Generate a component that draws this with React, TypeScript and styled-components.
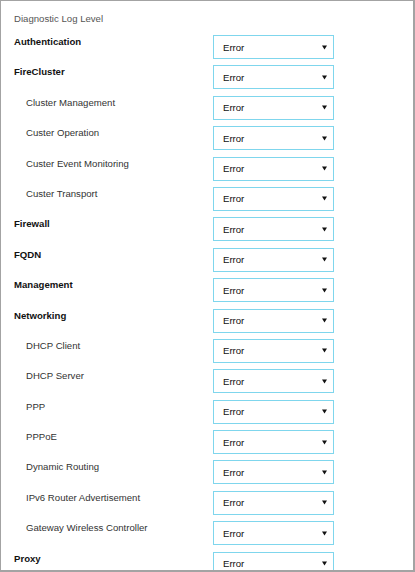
import React from 'react';
import styled, { createGlobalStyle } from 'styled-components';

const GlobalStyle = createGlobalStyle`
  html, body {
    margin: 0;
    padding: 0;
    background: #ffffff;
  }
  body {
    font-family: "Liberation Sans", Arial, sans-serif;
  }
`;

const Frame = styled.div`
  box-sizing: border-box;
  width: 415px;
  height: 572px;
  overflow: hidden;
  border-top: 1px solid #a3a3a3;
  border-left: 1px solid #a3a3a3;
  border-right: 2px solid #a3a3a3;
  border-bottom: 2px solid #a3a3a3;
  padding: 10.5px 0 0 13px;
  font-size: 9.6px;
`;

const Title = styled.div`
  line-height: 14px;
  color: #555555;
  margin-bottom: 9.5px;
`;

const List = styled.div`
  display: flex;
  flex-direction: column;
  gap: 6.4px;
`;

const Row = styled.div`
  display: flex;
  align-items: flex-start;
  height: 24px;
`;

const Label = styled.div<{ $sub?: boolean }>`
  width: 199px;
  box-sizing: border-box;
  padding-left: ${(p) => (p.$sub ? '12px' : '0')};
  line-height: 14px;
  font-weight: ${(p) => (p.$sub ? 'normal' : 'bold')};
  color: ${(p) => (p.$sub ? '#333333' : '#111111')};
  white-space: nowrap;
`;

const Select = styled.div`
  box-sizing: border-box;
  width: 121px;
  height: 24px;
  border: 1px solid #7fd6ed;
  display: flex;
  align-items: center;
  justify-content: space-between;
  padding: 0 6px 0 9px;
  color: #111111;
  background: #ffffff;
`;

const Arrow = styled.svg`
  width: 5px;
  height: 5px;
  display: block;
`;

const rows: { label: string; sub?: boolean }[] = [
  { label: 'Authentication' },
  { label: 'FireCluster' },
  { label: 'Cluster Management', sub: true },
  { label: 'Custer Operation', sub: true },
  { label: 'Custer Event Monitoring', sub: true },
  { label: 'Custer Transport', sub: true },
  { label: 'Firewall' },
  { label: 'FQDN' },
  { label: 'Management' },
  { label: 'Networking' },
  { label: 'DHCP Client', sub: true },
  { label: 'DHCP Server', sub: true },
  { label: 'PPP', sub: true },
  { label: 'PPPoE', sub: true },
  { label: 'Dynamic Routing', sub: true },
  { label: 'IPv6 Router Advertisement', sub: true },
  { label: 'Gateway Wireless Controller', sub: true },
  { label: 'Proxy' },
];

const LevelSelect: React.FC<{ value: string }> = ({ value }) => (
  <Select>
    <span>{value}</span>
    <Arrow viewBox="0 0 5 5">
      <path d="M0 0.5 L5 0.5 L2.5 4.5 Z" fill="#111" />
    </Arrow>
  </Select>
);

export default function App() {
  return (
    <>
      <GlobalStyle />
      <Frame>
        <Title>Diagnostic Log Level</Title>
        <List>
          {rows.map((r) => (
            <Row key={r.label}>
              <Label $sub={r.sub}>{r.label}</Label>
              <LevelSelect value="Error" />
            </Row>
          ))}
        </List>
      </Frame>
    </>
  );
}
